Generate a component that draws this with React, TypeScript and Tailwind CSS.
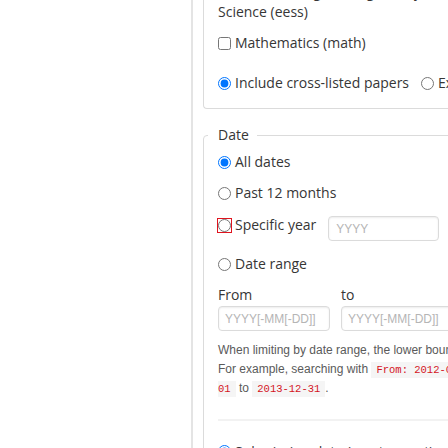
export default function App() {
  return (
    <div className="h-[448px] w-[448px] overflow-hidden bg-white">
      <div className="flex h-full">
        {/* left side, empty */}
        <div className="w-[191px] shrink-0" />
        <div className="w-[2px] shrink-0 bg-[#e4e4e4]" />

        {/* search form column */}
        <div className="-mt-[18px] ml-[10px] w-[640px] shrink-0 font-['Open_Sans',sans-serif] text-[14px] leading-5 text-[#363636]">
          {/* Subject fieldset (top cut off) */}
          <div className="rounded-bl-[4px] border-b border-l border-[#dbdbdb] pb-[15px] pl-[14px]">
            <div className="w-[270px]">
              <label>
                <input type="checkbox" className="m-0 mr-[4px] align-[-2px]" />
                Electrical Engineering and Systems Science (eess)
              </label>
            </div>
            <label className="mt-[11px] flex h-5 items-center">
              <input type="checkbox" className="m-0 mr-[4px]" />
              Mathematics (math)
            </label>
            <div className="mt-[20px] flex h-5 items-center whitespace-nowrap">
              <input type="radio" name="cross" defaultChecked className="m-0 mr-[4px]" />
              <span>Include cross-listed papers</span>
              <input type="radio" name="cross" className="m-0 ml-[12px] mr-[4px]" />
              <span>Exclude cross-listed papers</span>
            </div>
          </div>

          {/* Date fieldset */}
          <fieldset className="mt-[16px] min-w-0 rounded-[4px] border border-[#dbdbdb] px-[14px] pt-[7px] pb-4">
            <legend className="-ml-[10px] pl-[10px] pr-[8px] leading-5">Date</legend>

            <label className="flex h-5 items-center">
              <input type="radio" name="date" defaultChecked className="m-0 mr-[4px]" />
              All dates
            </label>
            <label className="mt-[11px] flex h-5 items-center">
              <input type="radio" name="date" className="m-0 mr-[4px]" />
              Past 12 months
            </label>
            <div className="mt-[12px] flex items-start">
              <label className="flex h-5 items-center">
                <input
                  type="radio"
                  name="date"
                  className="m-0 mr-[4px] outline outline-1 outline-offset-0 outline-[#e0141e]"
                />
                Specific year
              </label>
              <input
                placeholder="YYYY"
                className="mt-[1px] ml-[12px] h-[25px] w-[111px] rounded-[4px] border border-[#dbdbdb] px-[7px] font-['Liberation_Sans',Arial,sans-serif] text-[12px] shadow-[inset_0_1px_2px_rgba(10,10,10,0.08)] placeholder:text-[#b5b5b5]"
              />
            </div>
            <label className="mt-[13px] flex h-5 items-center">
              <input type="radio" name="date" className="m-0 mr-[4px]" />
              Date range
            </label>

            <div className="mt-[11px] grid w-[235px] grid-cols-2 gap-x-[11px]">
              <div className="h-5">From</div>
              <div className="h-5">to</div>
              <input
                placeholder="YYYY[-MM[-DD]]"
                className="mt-[1px] h-[25px] w-[112px] rounded-[4px] border border-[#dbdbdb] px-[6px] font-['Liberation_Sans',Arial,sans-serif] text-[12px] shadow-[inset_0_1px_2px_rgba(10,10,10,0.08)] placeholder:text-[#b5b5b5]"
              />
              <input
                placeholder="YYYY[-MM[-DD]]"
                className="mt-[1px] h-[25px] w-[112px] rounded-[4px] border border-[#dbdbdb] px-[6px] font-['Liberation_Sans',Arial,sans-serif] text-[12px] shadow-[inset_0_1px_2px_rgba(10,10,10,0.08)] placeholder:text-[#b5b5b5]"
              />
            </div>

            {/* help text */}
            <div className="mt-[10px] whitespace-nowrap font-['Liberation_Sans',Arial,sans-serif] text-[12px] leading-[18.5px] text-[#5a5a5a]">
              <div>
                When limiting by date range, the lower bound of the "from" date and the upper bound of the "to" date are used.
              </div>
              <div>
                For example, searching with{" "}
                <code className="bg-[#f5f5f5] px-[5px] py-[2px] font-['Liberation_Mono',monospace] text-[10.5px] text-[#d4141e]">From: 2012-02</code>{" "}
                and{" "}
                <code className="bg-[#f5f5f5] px-[5px] py-[2px] font-['Liberation_Mono',monospace] text-[10.5px] text-[#d4141e]">To: 2013</code>{" "}
                will search for papers submitted from{" "}
                <code className="bg-[#f5f5f5] px-[5px] py-[2px] font-['Liberation_Mono',monospace] text-[10.5px] text-[#d4141e]">2012-02-</code>
              </div>
              <div>
                <code className="bg-[#f5f5f5] py-[2px] pr-[5px] font-['Liberation_Mono',monospace] text-[10.5px] text-[#d4141e]">01</code>{" "}
                to{" "}
                <code className="bg-[#f5f5f5] px-[5px] py-[2px] font-['Liberation_Mono',monospace] text-[10.5px] text-[#d4141e]">2013-12-31</code>.
              </div>
            </div>

            <div className="mt-[20px] h-[2px] bg-[#f2f2f2]" />

            <label className="mt-[21px] flex h-5 items-center">
              <input type="radio" name="sort" defaultChecked className="m-0 mr-[4px]" />
              Submission date (most recent)
            </label>
          </fieldset>
        </div>
      </div>
    </div>
  );
}
